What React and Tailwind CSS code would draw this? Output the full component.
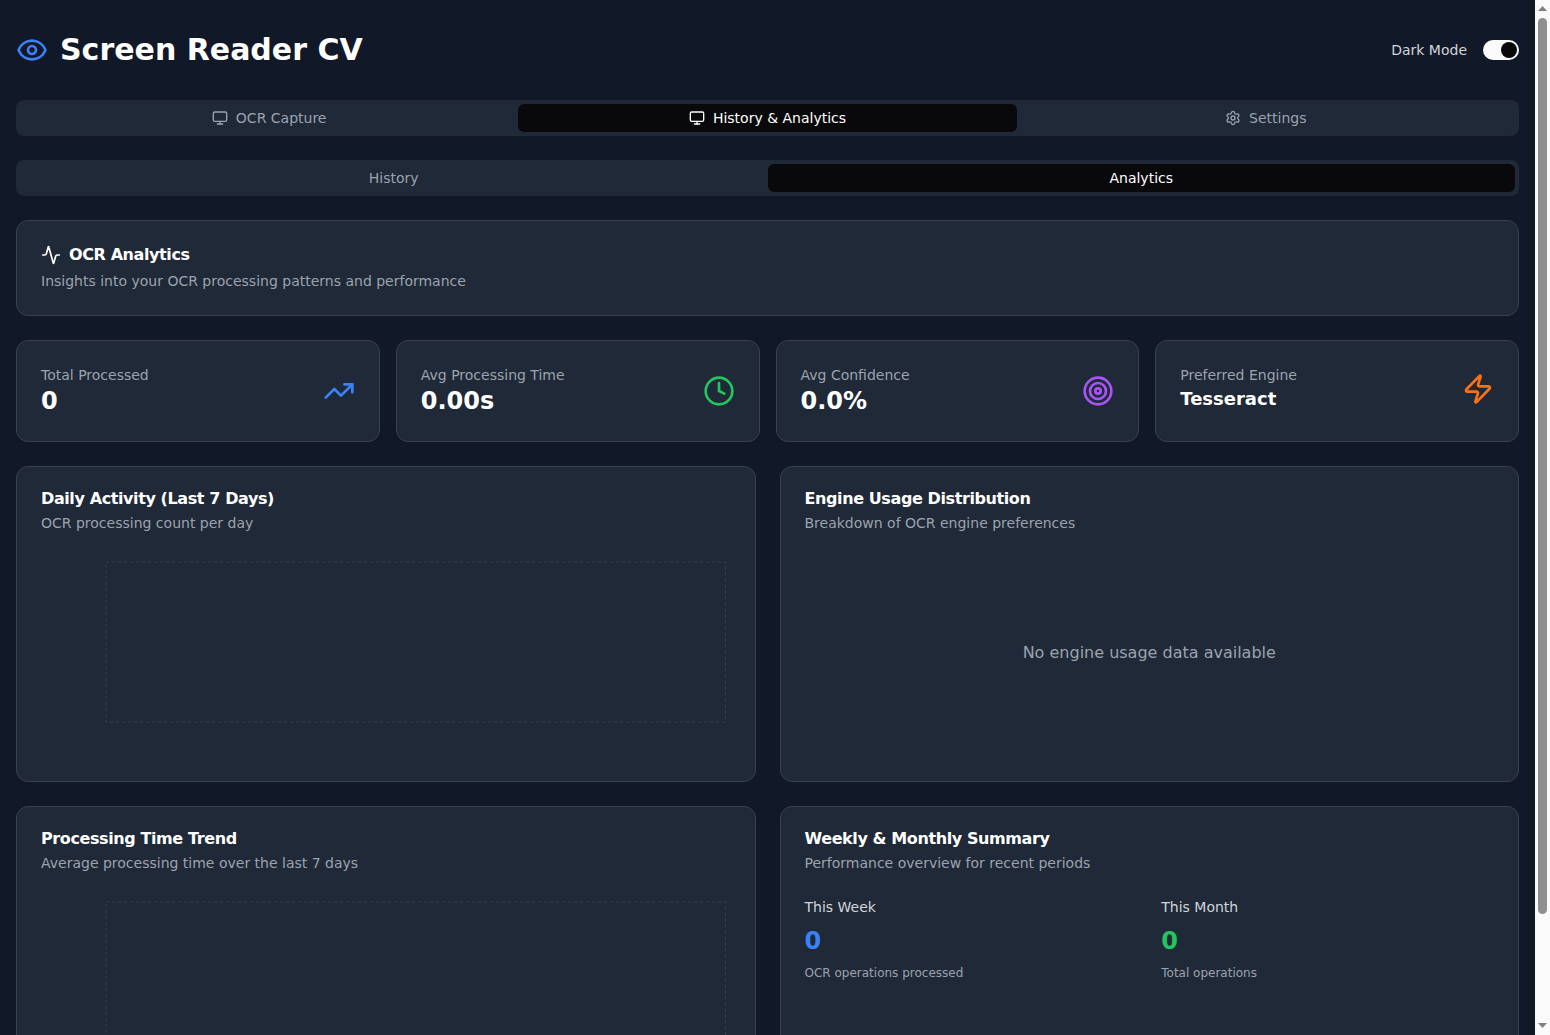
import React from "react";
import { Activity, Clock, Eye, Monitor, Settings, Target, TrendingUp, Zap } from "lucide-react";

const stats = [
  { label: "Total Processed", value: "0", Icon: TrendingUp, color: "text-[#3b82f6]" },
  { label: "Avg Processing Time", value: "0.00s", Icon: Clock, color: "text-[#22c55e]" },
  { label: "Avg Confidence", value: "0.0%", Icon: Target, color: "text-[#a855f7]" },
  { label: "Preferred Engine", value: "Tesseract", Icon: Zap, color: "text-[#f97316]", small: true },
];

function Card({ className = "", children }) {
  return (
    <div className={`rounded-xl border border-[#374151] bg-[#1f2937] ${className}`}>
      {children}
    </div>
  );
}

function CardHead({ title, description }) {
  return (
    <div className="flex flex-col gap-1.5 p-6">
      <h3 className="text-base leading-none font-bold tracking-tight text-white">{title}</h3>
      <p className="text-sm text-[#9ca3af]">{description}</p>
    </div>
  );
}

function EmptyChart() {
  return (
    <div className="h-[200px] pt-[5px] pr-[5px] pb-[35px] pl-[65px]">
      <svg width="100%" height="100%" className="block overflow-visible">
        <rect x="0" y="0" width="100%" height="100%" fill="none" stroke="#374151" strokeDasharray="3 3" />
      </svg>
    </div>
  );
}

function Summary({ label, value, color, note }) {
  return (
    <div className="flex flex-col gap-2">
      <p className="text-sm font-medium text-[#d1d5db]">{label}</p>
      <p className={`text-2xl font-bold ${color}`}>{value}</p>
      <p className="text-xs text-[#9ca3af]">{note}</p>
    </div>
  );
}

// the window's scrollbar, drawn because the capture hides the real one
function Scrollbar() {
  return (
    <div className="flex h-full w-[15px] shrink-0 flex-col items-center bg-[#fafafa]">
      <svg width="15" height="18" className="shrink-0 text-[#808080]">
        <path d="M3 11 L7.5 6 L12 11 Z" fill="currentColor" />
      </svg>
      <div className="flex-1">
        <div className="h-[896px] w-[9px] rounded-full bg-[#8f8f8f]"></div>
      </div>
      <svg width="15" height="18" className="shrink-0 text-[#808080]">
        <path d="M3 6 L12 6 L7.5 11 Z" fill="currentColor" />
      </svg>
    </div>
  );
}

export default function App() {
  return (
    <div className="flex h-screen overflow-hidden bg-[#111827] font-['DejaVu_Sans',sans-serif] text-white antialiased">
      <div className="min-w-0 flex-1 overflow-hidden p-4 pb-8">
        <header className="mb-4 flex items-center justify-between py-4">
          <div className="flex items-center gap-3">
            <Eye className="h-8 w-8 text-[#3b82f6]" />
            <h1 className="text-3xl font-bold text-white">Screen Reader CV</h1>
          </div>
          <div className="flex items-center gap-4">
            <span className="text-sm text-[#d1d5db]">Dark Mode</span>
            <div className="flex h-5 w-9 items-center justify-end rounded-full bg-[#fafafa] p-0.5">
              <div className="h-4 w-4 rounded-full bg-[#09090b]"></div>
            </div>
          </div>
        </header>

        <div className="mb-6 grid h-9 grid-cols-3 rounded-lg bg-[#1f2937] p-1 text-sm">
          <div className="flex items-center justify-center gap-2 rounded-md text-[#9ca3af]">
            <Monitor className="h-4 w-4" />
            OCR Capture
          </div>
          <div className="flex items-center justify-center gap-2 rounded-md bg-[#09090b] text-white">
            <Monitor className="h-4 w-4" />
            History &amp; Analytics
          </div>
          <div className="flex items-center justify-center gap-2 rounded-md text-[#9ca3af]">
            <Settings className="h-4 w-4" />
            Settings
          </div>
        </div>

        <div className="mb-6 grid h-9 grid-cols-2 rounded-lg bg-[#1f2937] p-1 text-sm">
          <div className="flex items-center justify-center rounded-md text-[#9ca3af]">History</div>
          <div className="flex items-center justify-center rounded-md bg-[#09090b] text-white">Analytics</div>
        </div>

        <Card className="mb-6">
          <div className="flex flex-col gap-1.5 p-6">
            <h2 className="flex items-center gap-2 text-base leading-none font-bold tracking-tight text-white">
              <Activity className="h-5 w-5" />
              OCR Analytics
            </h2>
            <p className="text-sm text-[#9ca3af]">Insights into your OCR processing patterns and performance</p>
          </div>
        </Card>

        <div className="mb-6 grid grid-cols-4 gap-4">
          {stats.map(({ label, value, Icon, color, small }) => (
            <Card key={label}>
              <div className="flex items-center justify-between p-6">
                <div>
                  <p className="text-sm text-[#9ca3af]">{label}</p>
                  <p className={small ? "text-lg font-bold text-white" : "text-2xl font-bold text-white"}>{value}</p>
                </div>
                <Icon className={`h-8 w-8 ${color}`} />
              </div>
            </Card>
          ))}
        </div>

        <div className="mb-6 grid grid-cols-2 gap-6">
          <Card>
            <CardHead title="Daily Activity (Last 7 Days)" description="OCR processing count per day" />
            <div className="px-6 pb-6">
              <EmptyChart />
            </div>
          </Card>
          <Card>
            <CardHead title="Engine Usage Distribution" description="Breakdown of OCR engine preferences" />
            <div className="px-6 pb-6">
              <div className="flex h-48 items-center justify-center text-base text-[#9ca3af]">
                No engine usage data available
              </div>
            </div>
          </Card>
        </div>

        <div className="grid grid-cols-2 gap-6">
          <Card>
            <CardHead title="Processing Time Trend" description="Average processing time over the last 7 days" />
            <div className="px-6 pb-6">
              <EmptyChart />
            </div>
          </Card>
          <Card>
            <CardHead title="Weekly & Monthly Summary" description="Performance overview for recent periods" />
            <div className="grid grid-cols-2 gap-6 px-6 pb-6">
              <Summary label="This Week" value="0" color="text-[#3b82f6]" note="OCR operations processed" />
              <Summary label="This Month" value="0" color="text-[#22c55e]" note="Total operations" />
            </div>
          </Card>
        </div>
      </div>
      <Scrollbar />
    </div>
  );
}
